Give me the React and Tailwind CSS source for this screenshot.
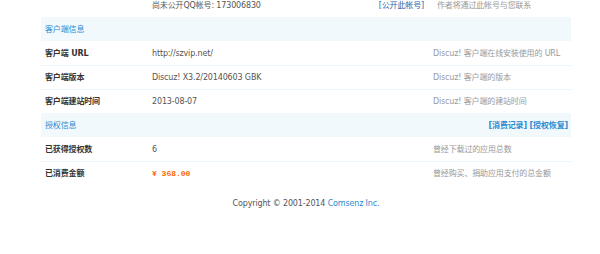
const font = "font-['DejaVu_Sans','Noto_Sans_CJK_SC',sans-serif]";

const rowBase = "flex items-center h-[24px] border-t border-dotted border-[#deeffb]";

const Row = ({ label, value, desc, first }) => (
  <div className={first ? "flex items-center h-[24px]" : rowBase}>
    <div className="w-[111px] pl-[4px] font-semibold text-[#333]">{label}</div>
    <div className="w-[281px] text-[#555]">{value}</div>
    <div className="flex-1 text-[#999]">{desc}</div>
  </div>
);

const Band = ({ title, right }) => (
  <div className="flex items-center justify-between h-[24px] bg-[#f2f9fd] pl-[4px] pr-[3px]">
    <span className="text-[#2b8bd0]">{title}</span>
    {right}
  </div>
);

export default function App() {
  return (
    <div className={`w-[600px] h-[254px] bg-white text-[8px] leading-[11px] tracking-[-0.15px] ${font}`}>
      <div className="ml-[41px] w-[530px]">
        <div className="flex h-[17px] items-start">
          <div className="w-[111px]" />
          <div className="w-[281px] flex justify-between pr-[9px] text-[#555]">
            <span>尚未公开QQ帐号: 173006830</span>
            <a className="text-[#2366a8]">[公开此帐号]</a>
          </div>
          <div className="flex-1 pl-[4px] text-[#999]">作者将通过此帐号与您联系</div>
        </div>

        <Band title="客户端信息" />
        <Row first label="客户端 URL" value="http://szvip.net/" desc="Discuz! 客户端在线安装使用的 URL" />
        <Row label="客户端版本" value="Discuz! X3.2/20140603 GBK" desc="Discuz! 客户端的版本" />
        <Row label="客户端建站时间" value="2013-08-07" desc="Discuz! 客户端的建站时间" />

        <Band
          title="授权信息"
          right={
            <span className="font-semibold text-[#2b8bd0]">
              [消费记录] [授权恢复]
            </span>
          }
        />
        <Row first label="已获得授权数" value="6" desc="曾经下载过的应用总数" />
        <Row
          label="已消费金额"
          value={
            <span className="font-['Liberation_Mono',monospace] font-bold tracking-normal text-[#f60]">¥ 368.00</span>
          }
          desc="曾经购买、捐助应用支付的总金额"
        />

        <div className="mt-[13px] text-center text-[#555]">
          Copyright © 2001-2014 <a className="text-[#2b8bd0]">Comsenz Inc.</a>
        </div>
      </div>
    </div>
  );
}
